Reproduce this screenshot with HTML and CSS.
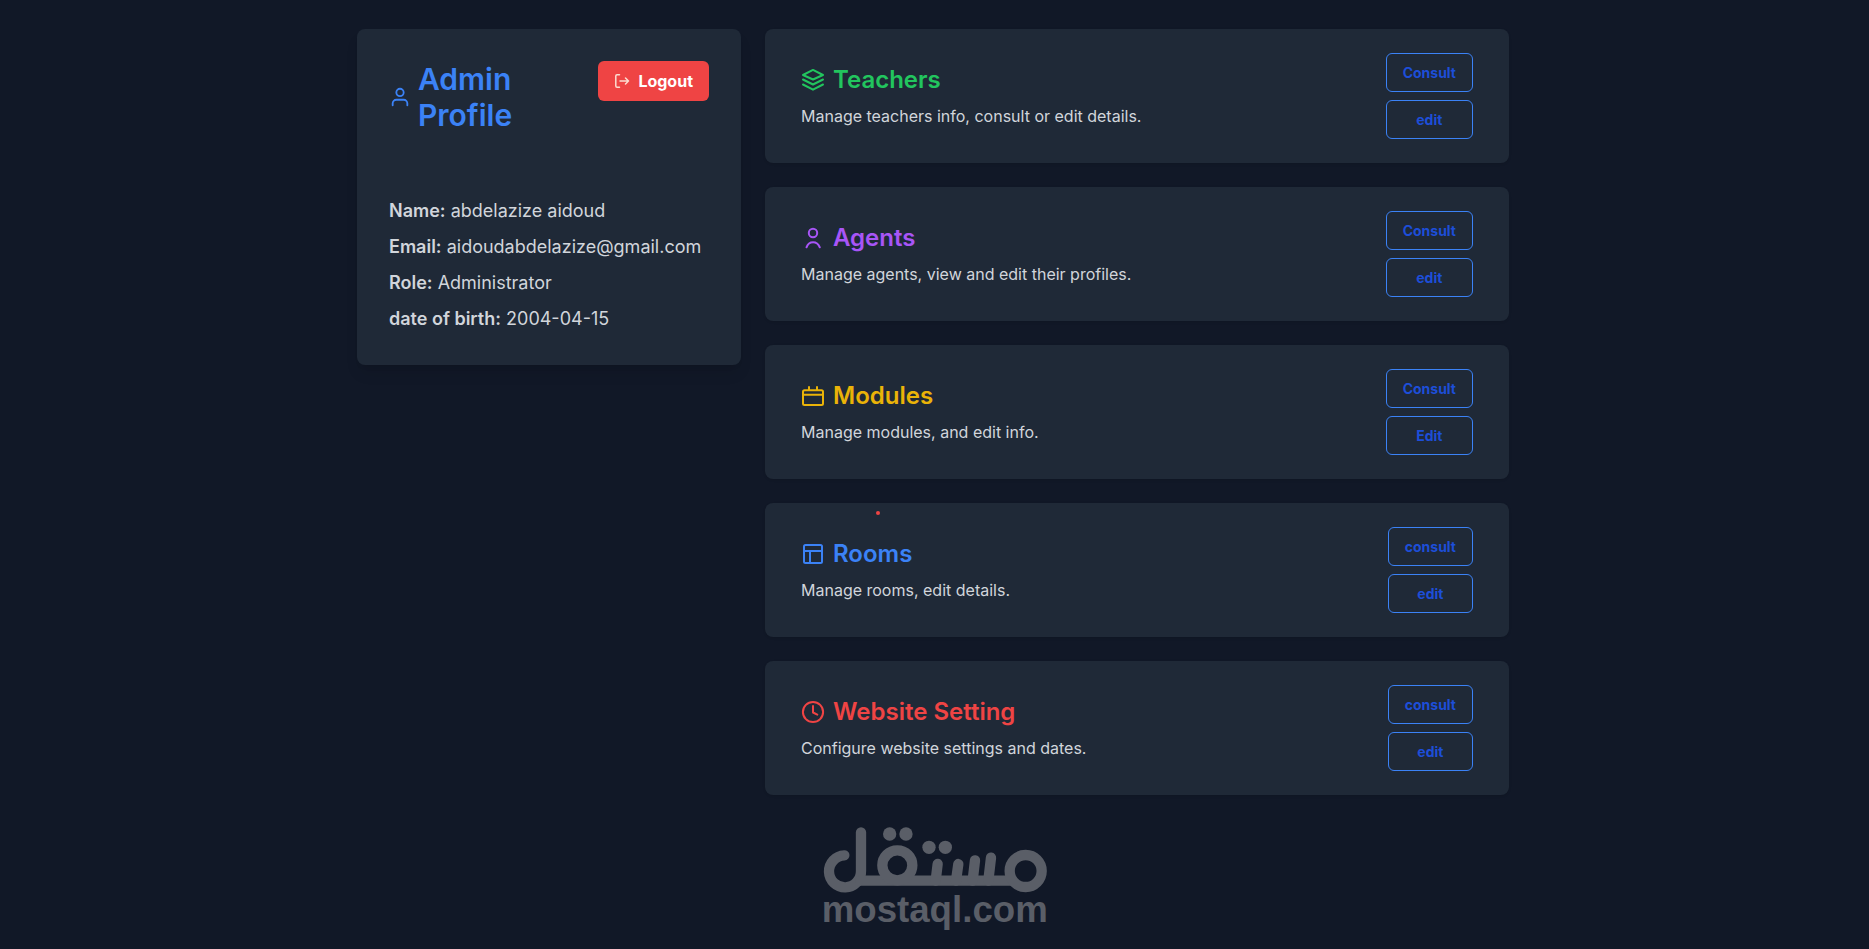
FILE: index.html
```html
<!DOCTYPE html>
<html lang="en">
<head>
<meta charset="utf-8">
<title>Admin Profile</title>
<link rel="stylesheet" href="styles.css">
</head>
<body>
<div class="page">
<main class="layout">
  <section class="profile">
    <header class="profile-head">
      <h1 class="profile-title">
        <svg class="icon-user" viewBox="0 0 24 24" aria-hidden="true"><circle cx="12" cy="7" r="4"/><path d="M4 21v-2a4 4 0 0 1 4-4h8a4 4 0 0 1 4 4v2"/></svg>
        <span>Admin Profile</span>
      </h1>
      <button class="logout" type="button">
        <svg class="icon-logout" viewBox="0 0 16 16" aria-hidden="true"><path d="M5.500 1.800H3a1.200 1.200 0 0 0-1.200 1.200v10a1.200 1.200 0 0 0 1.200 1.200h2.500M6 8h8.500M11.500 5l3 3-3 3"/></svg>
        Logout
      </button>
    </header>
    <div class="details">
      <p><strong>Name:</strong> abdelazize aidoud</p>
      <p><strong>Email:</strong> aidoudabdelazize@gmail.com</p>
      <p><strong>Role:</strong> Administrator</p>
      <p><strong>date of birth:</strong> 2004-04-15</p>
    </div>
  </section>

  <div class="cards">
    <section class="card">
      <div>
        <h2 class="card-title green"><svg class="icon" viewBox="0 0 24 24" aria-hidden="true"><path d="M12 1.900 22 7 12 11.500 2 7zM2 11.500l10 5 10-5M2 16.500l10 5.200 10-5.200"/></svg>Teachers</h2>
        <p class="card-text">Manage teachers info, consult or edit details.</p>
      </div>
      <div class="actions"><button class="action" type="button">Consult</button><button class="action" type="button">edit</button></div>
    </section>

    <section class="card">
      <div>
        <h2 class="card-title purple"><svg class="icon" viewBox="0 0 24 24" aria-hidden="true"><circle cx="12" cy="7" r="4.200"/><path d="M5.500 21.300c2.400-6.800 10.600-6.800 13.300 0"/></svg>Agents</h2>
        <p class="card-text">Manage agents, view and edit their profiles.</p>
      </div>
      <div class="actions"><button class="action" type="button">Consult</button><button class="action" type="button">edit</button></div>
    </section>

    <section class="card">
      <div>
        <h2 class="card-title yellow"><svg class="icon" viewBox="0 0 24 24" aria-hidden="true"><rect x="2" y="6.200" width="20" height="14.800" rx="1.500"/><path d="M2 10.800h20M8 3v3M16 3v3"/></svg>Modules</h2>
        <p class="card-text">Manage modules, and edit info.</p>
      </div>
      <div class="actions"><button class="action" type="button">Consult</button><button class="action" type="button">Edit</button></div>
    </section>

    <section class="card">
      <span class="dot"></span>
      <div>
        <h2 class="card-title blue"><svg class="icon" viewBox="0 0 24 24" aria-hidden="true"><rect x="3" y="3" width="18" height="18" rx="1.500"/><path d="M3 9h18M9 9v12"/></svg>Rooms</h2>
        <p class="card-text">Manage rooms, edit details.</p>
      </div>
      <div class="actions"><button class="action" type="button">consult</button><button class="action" type="button">edit</button></div>
    </section>

    <section class="card">
      <div>
        <h2 class="card-title red"><svg class="icon" viewBox="0 0 24 24" aria-hidden="true"><circle cx="12" cy="12" r="10.100"/><path d="M12 6v6.500l4.300 2.100"/></svg>Website Setting</h2>
        <p class="card-text">Configure website settings and dates.</p>
      </div>
      <div class="actions"><button class="action" type="button">consult</button><button class="action" type="button">edit</button></div>
    </section>
  </div>
</main>
</div>

<footer class="brand">
  <svg class="brand-logo" viewBox="36 36 672 312" role="img" aria-label="mostaql.com">
    <g class="brand-lines">
      <path d="M100 121A48 48 0 1 0 150 168V52"/>
      <path d="M148 197H598"/>
      <circle cx="259" cy="151" r="45"/>
      <path d="M380 147l-6 50M442 147l-7 50M492 136l-7 61M540 128l-8 69"/>
      <circle cx="644" cy="168" r="48"/>
    </g>
    <g class="brand-fill">
      <circle cx="236" cy="57" r="20"/><circle cx="285" cy="57" r="20"/>
      <circle cx="354" cy="97" r="20"/><circle cx="403" cy="97" r="20"/>
      <text class="brand-name" x="32" y="321">mostaql.com</text>
    </g>
  </svg>
</footer>
</body>
</html>
```
FILE: styles.css
```css
* { box-sizing: border-box; }

body {
  margin: 0;
  padding-top: 29px;
  background: #111827;
  color: #d1d5db;
  font-family: Inter, "Liberation Sans", sans-serif;
  font-size: 16px;
  line-height: 24px;
}

h1, h2, p { margin: 0; }

svg {
  fill: none;
  stroke: currentColor;
  stroke-linecap: round;
  stroke-linejoin: round;
  flex-shrink: 0;
}

.page { padding-right: 3px; }

.layout {
  display: flex;
  align-items: flex-start;
  gap: 24px;
  max-width: 1152px;
  margin: 0 auto;
}

.profile {
  flex: 0 0 calc(100% / 3);
  padding: 32px;
  background: #1f2937;
  border-radius: 8px;
  box-shadow: 0 10px 15px -3px rgba(0, 0, 0, 0.1), 0 4px 6px -4px rgba(0, 0, 0, 0.1);
}

.profile-head {
  display: flex;
  align-items: flex-start;
  justify-content: space-between;
  gap: 48px;
  margin-bottom: 64px;
}

.profile-title {
  display: flex;
  align-items: center;
  gap: 7px;
  color: #3b82f6;
  font-size: 30px;
  font-weight: 600;
  line-height: 36px;
}

.icon-user { width: 22px; height: 24px; stroke-width: 2; }

.logout {
  display: flex;
  align-items: center;
  gap: 8px;
  padding: 8px 16px;
  border: 0;
  border-radius: 6px;
  background: #ef4444;
  color: #fff;
  font: 700 16px/24px Inter, "Liberation Sans", sans-serif;
}

.icon-logout { width: 16px; height: 16px; stroke-width: 1.5; color: #fcdcd0; }

.details {
  display: flex;
  flex-direction: column;
  gap: 8px;
  font-size: 18px;
  line-height: 28px;
}

.details strong { font-weight: 600; }

.cards {
  flex: 1;
  display: flex;
  flex-direction: column;
  gap: 24px;
}

.card {
  position: relative;
  display: flex;
  align-items: center;
  justify-content: space-between;
  padding: 24px 36px;
  background: #1f2937;
  border-radius: 8px;
  box-shadow: 0 1px 3px rgba(0, 0, 0, 0.1);
}

.card-title {
  display: flex;
  align-items: center;
  gap: 8px;
  margin-bottom: 8px;
  font-size: 24px;
  font-weight: 600;
  line-height: 32px;
}

.icon { width: 24px; height: 24px; stroke-width: 2; }

.green { color: #22c55e; }
.purple { color: #a855f7; }
.yellow { color: #eab308; }
.blue { color: #3b82f6; }
.red { color: #ef4444; }

.actions { display: flex; flex-direction: column; gap: 8px; }

.action {
  padding: 8px 16px;
  border: 1px solid #3b82f6;
  border-radius: 6px;
  background: transparent;
  color: #1d4ed8;
  font: 700 14px/21px Inter, "Liberation Sans", sans-serif;
}

.dot {
  position: absolute;
  top: 8px;
  left: 111px;
  width: 4px;
  height: 4px;
  border-radius: 50%;
  background: #ef4444;
}

.brand {
  display: flex;
  justify-content: center;
  margin-top: 32px;
  color: #5a5e67;
}

.brand-logo { width: 224px; height: 104px; }
.brand-lines { stroke-width: 31; }
.brand-fill { fill: currentColor; stroke: none; }
.brand-name { font: 700 110px "Liberation Sans", sans-serif; }
```
